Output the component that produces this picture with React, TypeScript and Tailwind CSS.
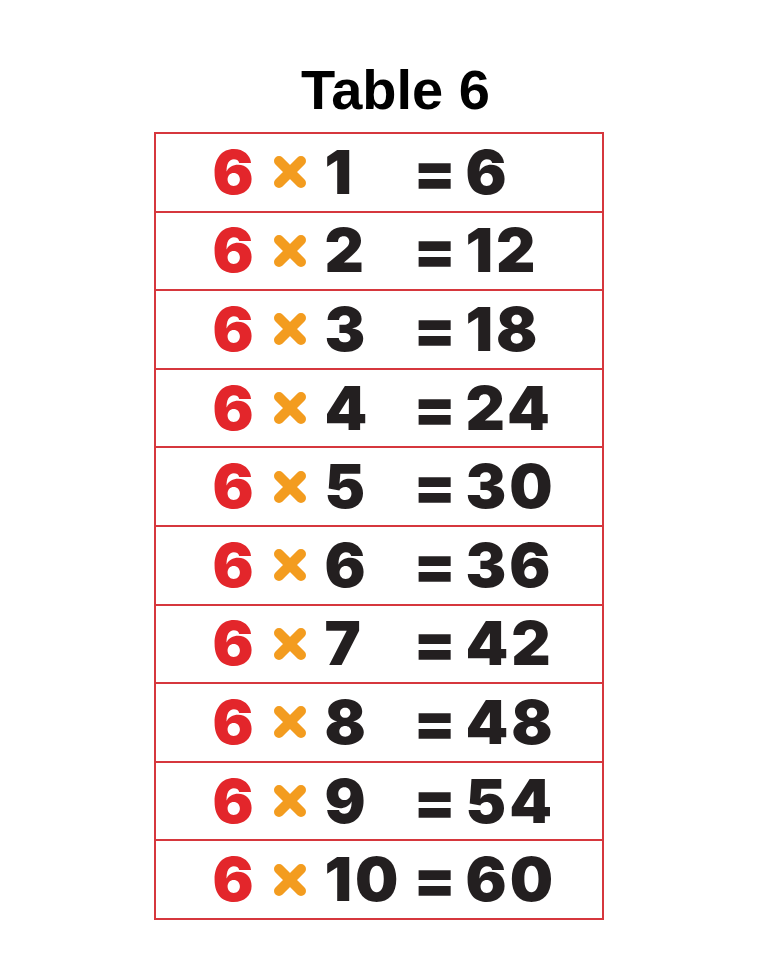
const rows = Array.from({ length: 10 }, (_, i) => ({ n: i + 1, result: 6 * (i + 1) }));

const Times = () => (
  <svg width="36" height="36" viewBox="0 0 36 36" className="block">
    <path d="M7 7 L29 29 M29 7 L7 29" stroke="#f39c1f" strokeWidth="10" strokeLinecap="round" fill="none" />
  </svg>
);

export default function App() {
  return (
    <div className="min-h-[980px] w-full bg-white">
      <h1 className="pt-[62px] pl-[34px] text-center text-[56px] font-bold leading-none text-black [font-family:'Liberation_Sans',Arial,sans-serif]">
        Table 6
      </h1>
      <div className="mx-auto mt-[14px] w-[450px] border-2 border-[#d6373d]">
        {rows.map((r, i) => (
          <div
            key={r.n}
            className={
              "box-content grid h-[76.6px] grid-cols-[57px_59px_53px_89px_52px_1fr] items-center text-[61px] font-black leading-none tracking-[3px] text-[#231f20] [font-family:Inter,'DejaVu_Sans',sans-serif] " +
              (i > 0 ? "border-t-2 border-[#d6373d]" : "")
            }
          >
            <span />
            <span className="text-[#e3262b]">6</span>
            <Times />
            <span>{r.n}</span>
            <span>=</span>
            <span>{r.result}</span>
          </div>
        ))}
      </div>
    </div>
  );
}
